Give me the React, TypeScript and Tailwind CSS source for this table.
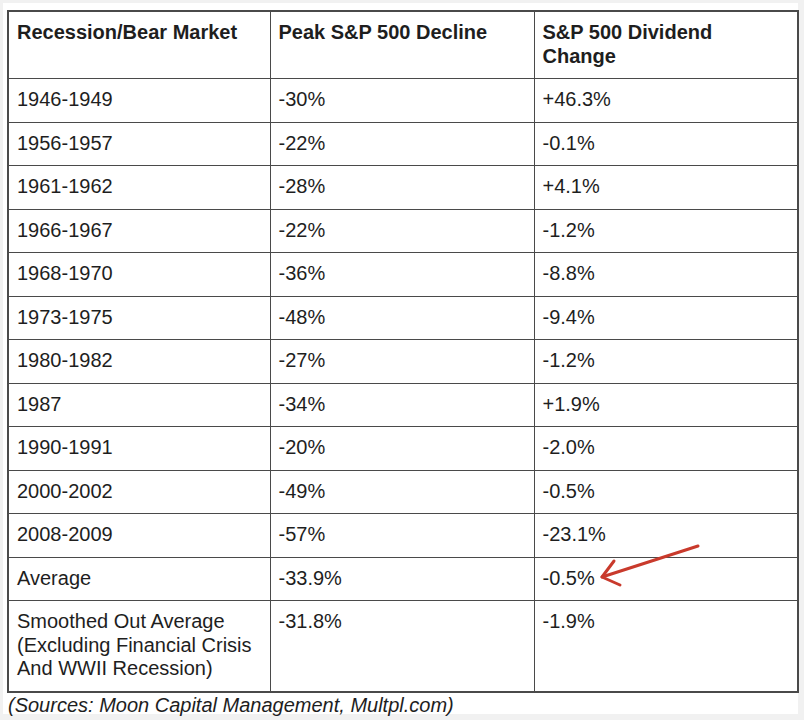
const rows: [string, string, string][] = [
  ["1946-1949", "-30%", "+46.3%"],
  ["1956-1957", "-22%", "-0.1%"],
  ["1961-1962", "-28%", "+4.1%"],
  ["1966-1967", "-22%", "-1.2%"],
  ["1968-1970", "-36%", "-8.8%"],
  ["1973-1975", "-48%", "-9.4%"],
  ["1980-1982", "-27%", "-1.2%"],
  ["1987", "-34%", "+1.9%"],
  ["1990-1991", "-20%", "-2.0%"],
  ["2000-2002", "-49%", "-0.5%"],
  ["2008-2009", "-57%", "-23.1%"],
  ["Average", "-33.9%", "-0.5%"],
];

const cell = "border border-[#4a4a4a] px-[8px] pt-[9px] pb-[10px] align-top";

export default function App() {
  return (
    <div className="h-[720px] w-[804px] bg-[#f1f1f1] pt-[3px] pl-[3px] pr-[6px] font-['Liberation_Sans',Arial,sans-serif] text-[20px] leading-[23.5px] text-[#1e1e1e]">
      <div className="relative h-[711px] bg-white pl-[4px] pt-[7px]">
        <table className="w-[790px] table-fixed border-collapse border-2 border-[#4a4a4a]">
          <colgroup>
            <col className="w-[262px]" />
            <col className="w-[264px]" />
            <col className="w-[264px]" />
          </colgroup>
          <thead>
            <tr>
              <th className={`${cell} text-left font-bold`}>Recession/Bear Market</th>
              <th className={`${cell} text-left font-bold`}>Peak S&amp;P 500 Decline</th>
              <th className={`${cell} text-left font-bold`}>
                S&amp;P 500 Dividend
                <br />
                Change
              </th>
            </tr>
          </thead>
          <tbody>
            {rows.map((r) => (
              <tr key={r[0]}>
                <td className={cell}>{r[0]}</td>
                <td className={cell}>{r[1]}</td>
                <td className={cell}>{r[2]}</td>
              </tr>
            ))}
            <tr>
              <td className={cell}>
                Smoothed Out Average
                <br />
                (Excluding Financial Crisis
                <br />
                And WWII Recession)
              </td>
              <td className={cell}>-31.8%</td>
              <td className={cell}>-1.9%</td>
            </tr>
          </tbody>
        </table>
        <p className="mt-[1px] pl-[1px] italic">(Sources: Moon Capital Management, Multpl.com)</p>

        {/* red annotation arrow */}
        <svg className="pointer-events-none absolute left-0 top-0" width="804" height="720" viewBox="0 0 804 720">
          <g stroke="#c93a2c" strokeWidth="3" strokeLinecap="round" strokeLinejoin="round" fill="none" transform="translate(-3 -3)">
            <path d="M698 546 L602 577" />
            <path d="M614 561 L602 577 L620 585" />
          </g>
        </svg>
      </div>
    </div>
  );
}
